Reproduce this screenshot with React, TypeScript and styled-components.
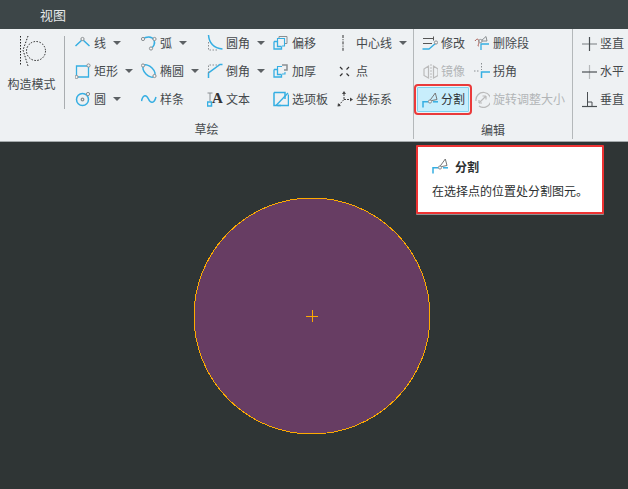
import { FunctionComponent, ReactNode } from 'react';
import styled, { createGlobalStyle } from 'styled-components';

const BLUE = '#35aee2';
const GREY = '#8a8f92';
const DARK = '#4a4f52';

const Handle = ({ x, y }: { x: number; y: number }) => (
    <circle cx={x} cy={y} r={1.6} fill="#f4f4f4" stroke={GREY} strokeWidth={1} />
);

const Ico: FunctionComponent<{ children: ReactNode; size?: number }> = ({ children, size = 16 }) => (
    <svg width={size} height={size} viewBox="0 0 16 16" fill="none" strokeWidth={1.3}>
        {children}
    </svg>
);

const icons: Record<string, ReactNode> = {
    line: (
        <Ico>
            <path d="M0.500 11L7.500 4.500L14.500 11" stroke={BLUE} strokeWidth={1.5} />
            <Handle x={7.500} y={4} />
        </Ico>
    ),
    rect: (
        <Ico>
            <path d="M1.500 3H13.500V14H1.500Z" stroke={BLUE} />
            <Handle x={13.500} y={2.500} />
            <Handle x={1.500} y={14} />
        </Ico>
    ),
    circle: (
        <Ico>
            <circle cx="7.500" cy="8.500" r="6" stroke={BLUE} strokeWidth={1.5} />
            <circle cx="7.500" cy="8.500" r="1.300" stroke={GREY} />
            <Handle x={13} y={3} />
        </Ico>
    ),
    arc: (
        <Ico>
            <path d="M2 4C5 1.500 11 1 13 5C14.500 8.500 12.500 12 10 13.500" stroke={BLUE} strokeWidth={1.5} />
            <Handle x={2} y={4} />
            <Handle x={13.500} y={4} />
            <Handle x={10} y={13.500} />
        </Ico>
    ),
    ellipse: (
        <Ico>
            <ellipse cx="8" cy="8" rx="7.500" ry="4.300" transform="rotate(45 8 8)" stroke={BLUE} strokeWidth={1.5} />
            <Handle x={2} y={2.500} />
            <Handle x={13.500} y={13} />
        </Ico>
    ),
    spline: (
        <Ico>
            <path d="M0.500 10C2 3 5.500 3.500 7.500 8C9.500 12.500 13 13 15 6" stroke={BLUE} strokeWidth={1.5} />
        </Ico>
    ),
    fillet: (
        <Ico>
            <path d="M1.500 0C2 7 6 13 15.500 14" stroke={BLUE} strokeWidth={1.5} />
            <path d="M1.500 7V15H10" stroke={GREY} strokeDasharray="1.500 1.500" strokeWidth={1} />
        </Ico>
    ),
    chamfer: (
        <Ico>
            <path d="M1.500 15V10L13 1.500H15.500" stroke={BLUE} strokeWidth={1.5} />
            <path d="M1.500 10V2H12" stroke={GREY} strokeDasharray="1.500 1.500" strokeWidth={1} />
        </Ico>
    ),
    text: (
        <Ico>
            <path d="M0.500 2H5.500M3 2V10" stroke={GREY} strokeWidth={1} />
            <rect x="0.500" y="11" width="4" height="4" stroke={BLUE} strokeWidth={1.5} />
            <text x="5" y="12" fontFamily="Liberation Serif, serif" fontWeight="700" fontSize="15" fill="#333">
                A
            </text>
        </Ico>
    ),
    offset: (
        <Ico>
            <path d="M6 3V1.500H14V8.500H11" stroke={GREY} strokeWidth={1} />
            <path d="M1 6.500V14H8.500V11.500M1 6.500H4.500V11.500H8.500" stroke={BLUE} />
            <path d="M4.500 6V3.500H11.500V11H9" stroke={BLUE} strokeWidth={1.100} />
        </Ico>
    ),
    thicken: (
        <Ico>
            <path d="M9 2H14V7H11" stroke={GREY} strokeWidth={1.500} />
            <path d="M1 6.500V14H8.500V11.500M1 6.500H4.500V11.500H8.500" stroke={BLUE} />
            <path d="M4.500 6V3.500H9M12 9V11H9" stroke={BLUE} strokeWidth={1.100} />
        </Ico>
    ),
    palette: (
        <Ico>
            <path d="M1 1.500H12V8M8 14.500H1V1.500" stroke={BLUE} strokeWidth={1.5} />
            <path d="M4.500 14.500H15.500V3.500" stroke={BLUE} strokeWidth={1.5} />
            <path d="M3 14.500L15 2" stroke={BLUE} strokeWidth={1.300} />
        </Ico>
    ),
    centerline: (
        <Ico>
            <path d="M6 0V16" stroke="#333" strokeDasharray="3 1.200 1 1.200" strokeWidth={1} />
        </Ico>
    ),
    point: (
        <Ico>
            <path d="M3 4L5.500 6.500M12 4L9.500 6.500M3 13L5.500 10.500M12 13L9.500 10.500" stroke="#333" strokeWidth={1.200} />
        </Ico>
    ),
    coord: (
        <Ico size={18}>
            <path d="M7 8V2M7 8.500H14M7 8.500L2 14" stroke="#444" strokeWidth={1} strokeDasharray="2 1" />
            <path d="M7 0L5 3H9ZM16 8.500L13 6.500V10.500ZM0.500 15.500L1 12L4 15Z" fill="#444" />
        </Ico>
    ),
    modify: (
        <Ico size={18}>
            <path d="M1 3.500H11.500M11.500 1.500V5.500" stroke="#555" strokeWidth={1} />
            <path d="M1 8.500H10" stroke="#555" strokeWidth={1} />
            <path d="M0.500 14H7L14 8" stroke={BLUE} strokeWidth={1.3} />
            <Handle x={14} y={7.500} />
        </Ico>
    ),
    deleteSeg: (
        <Ico size={18}>
            <path d="M1 6C3 3 5 4 5 7S3 10 5 11.500" stroke="#a8564c" strokeWidth={1} />
            <path d="M7 15V9H15" stroke={BLUE} strokeWidth={1.3} />
            <path d="M7 6L12 1.500M7 6L13 6M12 1.500L13 6" stroke={GREY} strokeWidth={1} />
            <Handle x={6.500} y={6} />
        </Ico>
    ),
    mirror: (
        <Ico size={18}>
            <path d="M2 6L6.500 3V15L2 12.500ZM16 6L11.500 3V15L16 12.500Z" stroke="#bbb" strokeWidth={1.2} />
            <path d="M9 1V17" stroke="#bbb" strokeDasharray="2 1" strokeWidth={1} />
        </Ico>
    ),
    corner: (
        <Ico size={18}>
            <path d="M0 8H6" stroke={GREY} strokeDasharray="1.500 1.500" strokeWidth={1} />
            <path d="M7.500 0V7" stroke={GREY} strokeDasharray="1.500 1.500" strokeWidth={1} />
            <path d="M7.500 15V9H16" stroke={BLUE} strokeWidth={1.5} />
        </Ico>
    ),
    divide: (
        <Ico>
            <path d="M1 15.500V9.800H6.700" stroke={BLUE} strokeWidth={1.5} />
            <path d="M11 9.800H16" stroke={BLUE} strokeWidth={1.5} />
            <path d="M7.500 9L13.300 1L15 7.500L7.500 9Z" stroke="#777" strokeWidth={1} />
            <Handle x={8} y={9.500} />
        </Ico>
    ),
    resize: (
        <Ico size={18}>
            <path d="M5 15A7.500 7.500 0 1 0 2 10" stroke="#bbb" strokeWidth={1.200} />
            <path d="M5 12L12 5M12 5H8.500M12 5V8.500" stroke="#bbb" strokeWidth={1.200} />
            <path d="M5 12H8M5 12V9" stroke="#bbb" strokeWidth={1.200} />
        </Ico>
    ),
    vertical: (
        <Ico size={18}>
            <path d="M1 9H16" stroke={GREY} strokeWidth={1.2} />
            <path d="M8.500 2V16" stroke={DARK} strokeWidth={1.2} />
        </Ico>
    ),
    horizontal: (
        <Ico size={18}>
            <path d="M8.500 2V16" stroke="#b5b8ba" strokeWidth={1.2} />
            <path d="M1 9H16" stroke={DARK} strokeWidth={1.2} />
        </Ico>
    ),
    perpendicular: (
        <Ico size={18}>
            <path d="M1 15.500H16" stroke={DARK} strokeWidth={1.2} />
            <path d="M6.500 1V15M6.500 11H11V15" stroke={DARK} strokeWidth={1} />
        </Ico>
    ),
};

type ToolData = { icon: string; label: string; caret?: boolean; disabled?: boolean; active?: boolean };
type ColumnData = { width: number; tools: ToolData[] };

const sketchColumns: ColumnData[] = [
    {
        width: 66,
        tools: [
            { icon: 'line', label: '线', caret: true },
            { icon: 'rect', label: '矩形', caret: true },
            { icon: 'circle', label: '圆', caret: true },
        ],
    },
    {
        width: 66,
        tools: [
            { icon: 'arc', label: '弧', caret: true },
            { icon: 'ellipse', label: '椭圆', caret: true },
            { icon: 'spline', label: '样条' },
        ],
    },
    {
        width: 66,
        tools: [
            { icon: 'fillet', label: '圆角', caret: true },
            { icon: 'chamfer', label: '倒角', caret: true },
            { icon: 'text', label: '文本' },
        ],
    },
    {
        width: 64,
        tools: [
            { icon: 'offset', label: '偏移' },
            { icon: 'thicken', label: '加厚' },
            { icon: 'palette', label: '选项板' },
        ],
    },
    {
        width: 76,
        tools: [
            { icon: 'centerline', label: '中心线', caret: true },
            { icon: 'point', label: '点' },
            { icon: 'coord', label: '坐标系' },
        ],
    },
];

const editColumns: ColumnData[] = [
    {
        width: 52,
        tools: [
            { icon: 'modify', label: '修改' },
            { icon: 'mirror', label: '镜像', disabled: true },
            { icon: 'divide', label: '分割', active: true },
        ],
    },
    {
        width: 98,
        tools: [
            { icon: 'deleteSeg', label: '删除段' },
            { icon: 'corner', label: '拐角' },
            { icon: 'resize', label: '旋转调整大小', disabled: true },
        ],
    },
];

const constraintColumns: ColumnData[] = [
    {
        width: 50,
        tools: [
            { icon: 'vertical', label: '竖直' },
            { icon: 'horizontal', label: '水平' },
            { icon: 'perpendicular', label: '垂直' },
        ],
    },
];

const ToolColumns: FunctionComponent<{ columns: ColumnData[] }> = ({ columns }) => (
    <>
        {columns.map((col) => (
            <Column key={col.tools[0].label} $width={col.width}>
                {col.tools.map((tool) => (
                    <Tool key={tool.label} $disabled={tool.disabled} $active={tool.active}>
                        <IconBox>{icons[tool.icon]}</IconBox>
                        <ToolLabel>{tool.label}</ToolLabel>
                        {tool.caret && <Caret />}
                    </Tool>
                ))}
            </Column>
        ))}
    </>
);

export default function App() {
    return (
        <Page>
            <GlobalStyle />
            <TitleBar>
                <TabName>视图</TabName>
            </TitleBar>
            <Ribbon>
                <Group $width={414}>
                    <Tools>
                        <ConstructMode>
                            <svg width="28" height="30" viewBox="0 0 28 30" fill="none" stroke="#222" strokeWidth="1" strokeDasharray="1.500 1.500">
                                <path d="M1.500 0V30" />
                                <path d="M9 0L4 14L9 30" />
                                <circle cx="17" cy="15" r="9.500" />
                            </svg>
                            <ConstructLabel>构造模式</ConstructLabel>
                        </ConstructMode>
                        <SketchTools>
                            <ToolColumns columns={sketchColumns} />
                        </SketchTools>
                    </Tools>
                    <GroupLabel>草绘</GroupLabel>
                </Group>
                <Group $width={159}>
                    <EditTools>
                        <ToolColumns columns={editColumns} />
                    </EditTools>
                    <GroupLabel>编辑</GroupLabel>
                </Group>
                <LastGroup>
                    <EditTools>
                        <ToolColumns columns={constraintColumns} />
                    </EditTools>
                </LastGroup>
            </Ribbon>
            <Canvas>
                <svg width="238" height="238" viewBox="0 0 238 238">
                    <circle cx="119" cy="119" r="118" fill="#673d63" stroke="#fdaa00" strokeWidth="1" shapeRendering="crispEdges" />
                    <path d="M113 119.500H125M119.500 113V125" stroke="#fdaa00" strokeWidth="1" />
                </svg>
            </Canvas>
            <Tooltip>
                <TooltipHead>
                    <IconBox>{icons.divide}</IconBox>
                    <TooltipTitle>分割</TooltipTitle>
                </TooltipHead>
                <TooltipText>在选择点的位置处分割图元。</TooltipText>
            </Tooltip>
        </Page>
    );
}

const GlobalStyle = createGlobalStyle`
    html, body {
        margin: 0;
        padding: 0;
        background: #2f3535;
    }
    * {
        box-sizing: border-box;
    }
`;

const Page = styled.div`
    position: relative;
    width: 628px;
    height: 489px;
    overflow: hidden;
    display: flex;
    flex-direction: column;
    font-family: 'Noto Sans CJK SC', 'Liberation Sans', sans-serif;
    font-size: 12px;
    color: #45494c;
`;

const TitleBar = styled.div`
    height: 29px;
    flex: none;
    display: flex;
    align-items: center;
    padding-left: 40px;
    background: #3d4648;
`;

const TabName = styled.span`
    font-size: 13px;
    color: #e6e9ea;
`;

const Ribbon = styled.div`
    height: 113px;
    flex: none;
    display: flex;
    background: #eef1f3;
    border-bottom: 1px solid #a4a9ab;
`;

const Group = styled.div<{ $width: number }>`
    width: ${(p) => p.$width}px;
    flex: none;
    display: flex;
    flex-direction: column;
    margin-bottom: 2px;
    border-right: 1px solid #b4b8ba;
`;

const LastGroup = styled.div`
    flex: 1;
    display: flex;
    flex-direction: column;
`;

const Tools = styled.div`
    height: 84px;
    display: flex;
`;

const ConstructMode = styled.div`
    width: 64px;
    height: 80px;
    flex: none;
    display: flex;
    flex-direction: column;
    align-items: center;
    padding: 7px 0 0 2px;
    gap: 10px;
`;

const ConstructLabel = styled.span`
    margin-left: -3px;
    line-height: 16px;
`;

const SketchTools = styled.div`
    display: flex;
    height: 73px;
    margin-top: 7px;
    padding-left: 10px;
    border-left: 1px solid #a9adb0;

    & > div {
        margin-top: -7px;
        height: 84px;
    }
`;

const EditTools = styled.div`
    height: 84px;
    display: flex;
    padding-left: 8px;
`;

const Column = styled.div<{ $width: number }>`
    width: ${(p) => p.$width}px;
    flex: none;
    display: flex;
    flex-direction: column;
`;

const Tool = styled.div<{ $disabled?: boolean; $active?: boolean }>`
    height: ${(p) => (p.$active ? '25px' : '28px')};
    display: flex;
    align-items: center;
    gap: 3px;
    white-space: nowrap;
    color: ${(p) => (p.$disabled ? '#b2b5b7' : 'inherit')};
    ${(p) =>
        p.$active &&
        `
        margin: 2px 5px 1px -5px;
        padding-left: 4px;
        background: #c8eefc;
        border: 1px solid #7fd2ef;
        border-radius: 1px;
        outline: 2px solid #ea3a3a;
        outline-offset: 1px;
        color: #2f3336;
    `}
`;

const ToolLabel = styled.span`
    margin-top: -2px;
`;

const IconBox = styled.span`
    width: 16px;
    height: 18px;
    flex: none;
    display: flex;
    align-items: center;
    justify-content: flex-start;
`;

const Caret = styled.span`
    width: 0;
    height: 0;
    margin-left: 4px;
    border-left: 4px solid transparent;
    border-right: 4px solid transparent;
    border-top: 4px solid #5c6164;
`;

const GroupLabel = styled.div`
    height: 27px;
    padding-top: 6px;
    display: flex;
    align-items: center;
    justify-content: center;
`;

const Canvas = styled.div`
    flex: 1;
    padding: 55px 0 0 193px;

    & > svg {
        display: block;
    }
`;

const Tooltip = styled.div`
    position: absolute;
    left: 416px;
    top: 145px;
    width: 188px;
    height: 69px;
    padding: 9px 14px;
    background: #ffffff;
    border: 2px solid #ee3333;
    border-radius: 1px;
    box-shadow: 0 1px 0 #8d9294;
    color: #2c2f31;
`;

const TooltipHead = styled.div`
    display: flex;
    align-items: center;
    gap: 7px;
    height: 20px;
`;

const TooltipTitle = styled.span`
    font-weight: 700;
`;

const TooltipText = styled.div`
    margin-top: 6px;
    line-height: 18px;
    white-space: nowrap;
`;
